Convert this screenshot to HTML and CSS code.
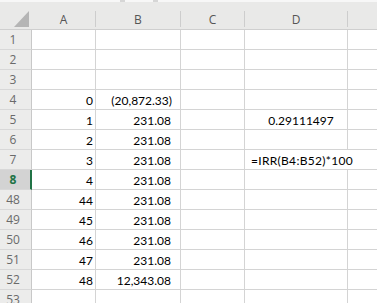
FILE: index.html
```html
<!DOCTYPE html>
<html>
<head>
<meta charset="utf-8">
<link rel="stylesheet" href="styles.css">
</head>
<body>
<div class="topbar">
  <div class="tb-box tb-name"></div>
  <div class="tb-box tb-btn"></div>
  <div class="tb-box tb-formula"></div>
</div>
<div class="sheet">
  <div class="hc corner"><svg width="16" height="16" viewBox="0 0 16 16"><polygon points="15,0 15,16 0,16" fill="#b5b5b5"/></svg></div>
  <div class="hc"><div class="hcol">A</div></div>
  <div class="hc"><div class="hcol">B</div></div>
  <div class="hc"><div class="hcol">C</div></div>
  <div class="hc"><div class="hcol">D</div></div>
  <div class="hc"><div class="hcol last"></div></div>

  <div class="rh">1</div><div class="c"></div><div class="c"></div><div class="c"></div><div class="c"></div><div class="c e"></div>
  <div class="rh">2</div><div class="c"></div><div class="c"></div><div class="c"></div><div class="c"></div><div class="c e"></div>
  <div class="rh">3</div><div class="c"></div><div class="c"></div><div class="c"></div><div class="c"></div><div class="c e"></div>
  <div class="rh">4</div><div class="c num">0</div><div class="c num neg">(20,872.33)</div><div class="c"></div><div class="c"></div><div class="c e"></div>
  <div class="rh">5</div><div class="c num">1</div><div class="c num pos">231.08</div><div class="c"></div><div class="c mid">0.29111497</div><div class="c e"></div>
  <div class="rh">6</div><div class="c num">2</div><div class="c num pos">231.08</div><div class="c"></div><div class="c"></div><div class="c e"></div>
  <div class="rh">7</div><div class="c num">3</div><div class="c num pos">231.08</div><div class="c"></div><div class="c over">=IRR(B4:B52)*100</div><div class="c e"></div>
  <div class="rh sel">8</div><div class="c num">4</div><div class="c num pos">231.08</div><div class="c"></div><div class="c"></div><div class="c e"></div>
  <div class="rh">48</div><div class="c num">44</div><div class="c num pos">231.08</div><div class="c"></div><div class="c"></div><div class="c e"></div>
  <div class="rh">49</div><div class="c num">45</div><div class="c num pos">231.08</div><div class="c"></div><div class="c"></div><div class="c e"></div>
  <div class="rh">50</div><div class="c num">46</div><div class="c num pos">231.08</div><div class="c"></div><div class="c"></div><div class="c e"></div>
  <div class="rh">51</div><div class="c num">47</div><div class="c num pos">231.08</div><div class="c"></div><div class="c"></div><div class="c e"></div>
  <div class="rh">52</div><div class="c num">48</div><div class="c num pos">12,343.08</div><div class="c"></div><div class="c"></div><div class="c e"></div>
  <div class="rh">53</div><div class="c"></div><div class="c"></div><div class="c"></div><div class="c"></div><div class="c e"></div>
</div>
</body>
</html>
```
FILE: styles.css
```css
html, body {
  margin: 0;
  padding: 0;
  background: #ffffff;
  overflow: hidden;
}
body {
  width: 377px;
  height: 303px;
}
.topbar {
  display: flex;
  height: 2px;
  background: #d6d6d6;
  gap: 5px;
}
.tb-box {
  background: #f7f7f7;
  height: 2px;
}
.tb-name { width: 120px; }
.tb-btn { width: 28px; }
.tb-formula { flex: 1; }

.sheet {
  display: grid;
  grid-template-columns: 32px 64px 85px 64px 103px 1fr;
  grid-auto-rows: 20px;
  grid-template-rows: 28px;
}
.hc {
  background: #e9e9e8;
  border-bottom: 1px solid #cfcfcf;
  box-sizing: border-box;
  height: 28px;
  display: flex;
  flex-direction: column;
  justify-content: flex-start;
}
.hcol {
  margin-top: 9px;
  height: 16px;
  border-right: 1px solid #cdcdcd;
  text-align: center;
  font-family: "Open Sans", "Noto Sans", sans-serif;
  font-size: 12px;
  line-height: 17px;
  color: #555555;
}
.hcol.last { border-right: none; }
.corner {
  padding: 9px 0 0 14px;
}
.corner svg { display: block; }

.rh {
  background: #ececeb;
  border-bottom: 1px solid #d8d8d8;
  border-right: 1px solid #c8c8c8;
  box-sizing: border-box;
  font-family: "Open Sans", "Noto Sans", sans-serif;
  font-size: 12px;
  line-height: 20px;
  color: #6a6a6a;
  text-align: center;
  padding-right: 5px;
  overflow: hidden;
}
.rh.sel {
  background: #d3d3d3;
  color: #217346;
  font-weight: bold;
  border-right: 2px solid #217346;
  padding-right: 4px;
}
.c {
  border-bottom: 1px solid #d4d4d4;
  border-right: 1px solid #d4d4d4;
  box-sizing: border-box;
  font-family: Lato, "Liberation Sans", sans-serif;
  font-size: 12px;
  line-height: 19px;
  color: #000000;
  white-space: nowrap;
  padding: 1px 2px 0 2px;
}
.c.e { border-right: none; }
.num { text-align: right; padding-right: 2px; }
.num.pos { padding-right: 9px; }
.num.neg { padding-right: 8px; }
.mid { text-align: center; padding-left: 12px; }
.over {
  overflow: visible;
  padding-left: 6px;
  position: relative;
  z-index: 1;
  background: #fff;
  margin-right: -8px;
  border-right: none;
  letter-spacing: 0.3px;
}
```
